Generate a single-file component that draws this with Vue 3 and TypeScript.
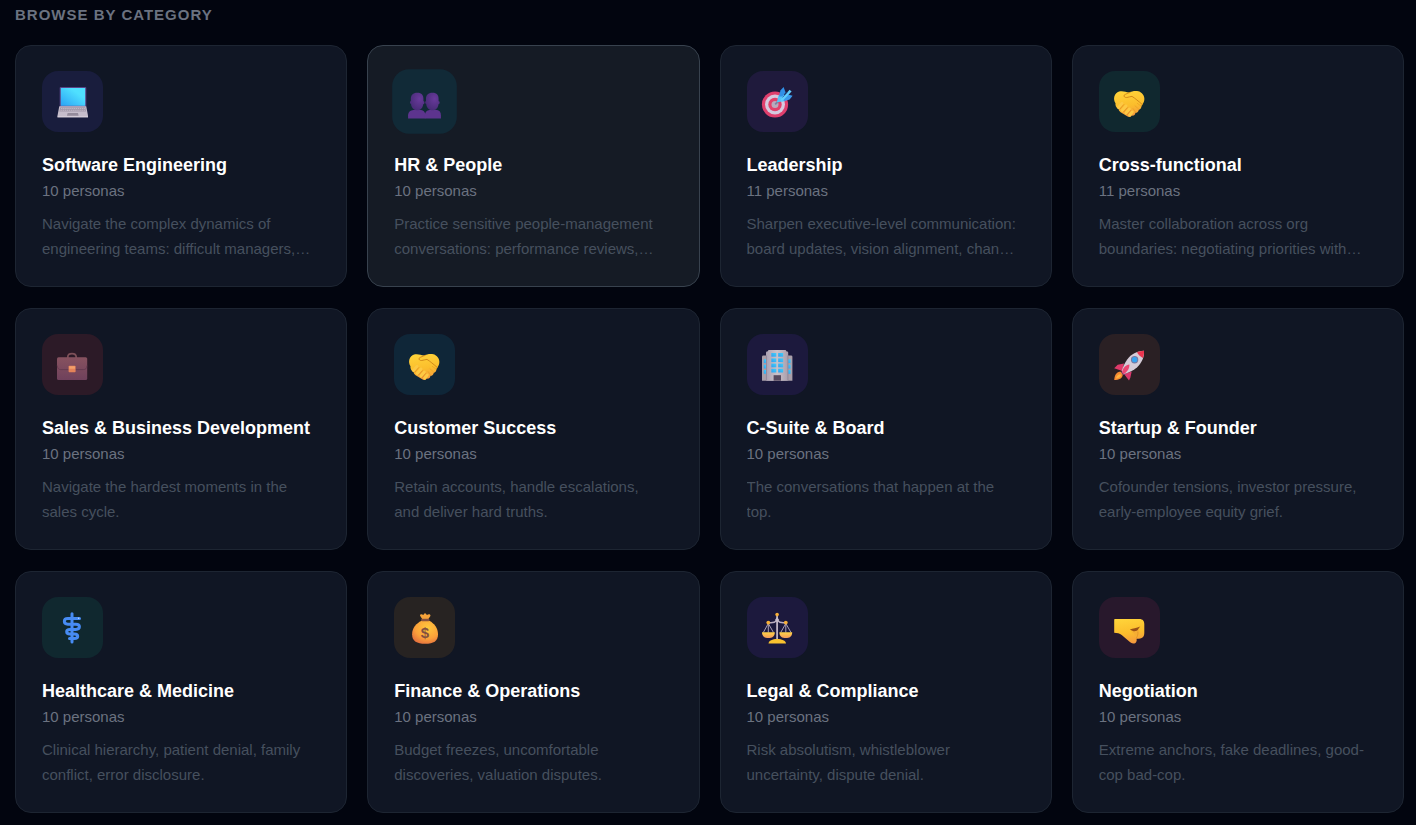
<script setup lang="ts">
interface Category {
  icon: string
  tone: string
  title: string
  count: number
  text: string
  active?: boolean
}

const categories: Category[] = [
  { icon: 'laptop', tone: 'indigo', title: 'Software Engineering', count: 10, text: 'Navigate the complex dynamics of engineering teams: difficult managers,…' },
  { icon: 'people', tone: 'teal', title: 'HR & People', count: 10, text: 'Practice sensitive people-management conversations: performance reviews,…', active: true },
  { icon: 'target', tone: 'purple', title: 'Leadership', count: 11, text: 'Sharpen executive-level communication: board updates, vision alignment, chan…' },
  { icon: 'handshake', tone: 'green', title: 'Cross-functional', count: 11, text: 'Master collaboration across org boundaries: negotiating priorities with…' },
  { icon: 'briefcase', tone: 'red', title: 'Sales & Business Development', count: 10, text: 'Navigate the hardest moments in the sales cycle.' },
  { icon: 'handshake', tone: 'sky', title: 'Customer Success', count: 10, text: 'Retain accounts, handle escalations, and deliver hard truths.' },
  { icon: 'building', tone: 'violet', title: 'C-Suite & Board', count: 10, text: 'The conversations that happen at the top.' },
  { icon: 'rocket', tone: 'orange', title: 'Startup & Founder', count: 10, text: 'Cofounder tensions, investor pressure, early-employee equity grief.' },
  { icon: 'medical', tone: 'green', title: 'Healthcare & Medicine', count: 10, text: 'Clinical hierarchy, patient denial, family conflict, error disclosure.' },
  { icon: 'money', tone: 'amber', title: 'Finance & Operations', count: 10, text: 'Budget freezes, uncomfortable discoveries, valuation disputes.' },
  { icon: 'scales', tone: 'violet', title: 'Legal & Compliance', count: 10, text: 'Risk absolutism, whistleblower uncertainty, dispute denial.' },
  { icon: 'fist', tone: 'pink', title: 'Negotiation', count: 10, text: 'Extreme anchors, fake deadlines, good-cop bad-cop.' },
]
</script>

<template>
  <section class="browse" aria-labelledby="browse-title">
    <svg class="defs" aria-hidden="true">
      <defs>
        <linearGradient id="g-screen" x1="1" y1="0" x2="0" y2="1">
          <stop offset="0.3" stop-color="#4fe0ff" /><stop offset="1" stop-color="#2aa2f5" />
        </linearGradient>
        <linearGradient id="g-hand" x1="0.2" y1="0" x2="0.4" y2="1">
          <stop offset="0" stop-color="#ffd43a" /><stop offset="0.6" stop-color="#fbbd2c" /><stop offset="1" stop-color="#f59a3e" />
        </linearGradient>
        <radialGradient id="g-head" cx="0.65" cy="0.35" r="0.75">
          <stop offset="0" stop-color="#693a9b" /><stop offset="1" stop-color="#452a74" />
        </radialGradient>
        <linearGradient id="g-case" x1="0" y1="0" x2="0" y2="1">
          <stop offset="0" stop-color="#87525f" /><stop offset="1" stop-color="#6f415c" />
        </linearGradient>
        <linearGradient id="g-wall" x1="0" y1="0" x2="1" y2="0">
          <stop offset="0" stop-color="#aaa0b2" /><stop offset="0.5" stop-color="#cbc3cb" /><stop offset="1" stop-color="#a89eac" />
        </linearGradient>
        <linearGradient id="g-window" x1="0" y1="1" x2="1" y2="0">
          <stop offset="0" stop-color="#2f9ff0" /><stop offset="1" stop-color="#42d0fb" />
        </linearGradient>
        <linearGradient id="g-pan" x1="0" y1="0" x2="0" y2="1">
          <stop offset="0" stop-color="#ffd447" /><stop offset="1" stop-color="#f59a5b" />
        </linearGradient>
        <radialGradient id="g-bag" cx="0.6" cy="0.3" r="0.8">
          <stop offset="0" stop-color="#ffc83c" /><stop offset="0.6" stop-color="#fba03a" /><stop offset="1" stop-color="#e0693f" />
        </radialGradient>
      </defs>
    </svg>

    <h2 id="browse-title" class="heading">BROWSE BY CATEGORY</h2>

    <div class="grid">
      <a v-for="c in categories" :key="c.title" href="#" class="card" :class="{ active: c.active }">
        <span class="tile" :class="c.tone">
          <svg class="icon" viewBox="0 -1 31 31" aria-hidden="true">
            <g v-if="c.icon === 'laptop'">
              <rect x="2.7" y="0" width="26.6" height="20" rx="1" fill="#5b4487" />
              <rect x="3.8" y="1" width="24.4" height="17.8" fill="url(#g-screen)" />
              <path d="M2.3 19.2H29.2L31 28.6V30.3H.5V28.6Z" fill="#c6bdcb" />
              <path d="M3.2 20.3H28.3L29.1 24.6H2.4Z" fill="#a298a9" />
              <path d="M4 21.5H28M3.5 23.3H28.5" stroke="#d5cdd7" stroke-width=".6" stroke-dasharray="1.4 .7" />
              <path d="M10.6 26H21L21.6 28.7H10Z" fill="#948b9b" />
              <path d="M.5 29.4H31V30.3H.5Z" fill="#ded7df" />
            </g>
            <g v-else-if="c.icon === 'people'">
              <path d="M0 30.5V27.5C0 23.7 3.5 22.5 6 22.3H11C14.4 22.5 16.3 24.4 16.3 27.5V30.5Z" fill="#5d348e" />
              <path d="M15.8 30.5V27.5C16 23.7 19 22.5 21 22.3H26C29.4 22.5 31 24.4 31 27.5V30.5Z" fill="#5d348e" />
              <path d="M8.7 6.2C13 6.2 14.6 8.7 14.5 12.3V14.2C15.7 13.9 16 16.8 14.3 17C14 20.2 12 22.7 8.7 22.7S3 20.2 2.8 16.8C1.5 16.6 1.4 14.2 2.6 14V12C2.6 8.6 4.5 6.2 8.7 6.2Z" fill="url(#g-head)" />
              <path d="M23 6.2C27.3 6.2 28.9 8.7 28.8 12.3V14.2C30.1 13.9 30.3 16.8 28.7 17C28.4 20.2 26.4 22.7 23 22.7S17.4 20.2 17.1 16.8C15.8 16.6 15.8 14.2 16.9 14V12C16.9 8.6 18.8 6.2 23 6.2Z" fill="url(#g-head)" />
            </g>
            <g v-else-if="c.icon === 'target'">
              <circle cx="13" cy="17.5" r="13.1" fill="#df3f6d" />
              <circle cx="13" cy="17.5" r="10" fill="#d5c9de" />
              <circle cx="13" cy="17.5" r="6.7" fill="#e2416a" />
              <circle cx="13" cy="17.5" r="3.5" fill="#baa9bc" />
              <path d="M13.2 17.4L18 12.5" stroke="#7685a4" stroke-width="1.8" />
              <path d="M14.8 15.2L16.4 8.8L20 6L25.4 10.3L22.4 14.2Z" fill="#55c3f7" />
              <path d="M17 9.4L18.4 3.4L21.6 0L23.6 5.4L20.4 9.6Z" fill="#3190e6" />
              <path d="M21.6 11.4L25.2 7.2L30.6 8.8L27.6 12.4L22 14.2Z" fill="#3b9bec" />
              <path d="M18.2 13.2L27.6 2.8L29.6 4.6L20.2 14.2Z" fill="#62cffc" />
              <path d="M20.6 10.4L25.4 5.2" stroke="#2765ad" stroke-width=".9" />
            </g>
            <g v-else-if="c.icon === 'handshake'">
              <path d="M6 4.3C9.3 3.7 12.2 5 14.8 5.6C18.3 4 23.4 3.3 26.5 5.2C30.5 7.6 31.4 12.6 29.3 16C28.5 17.5 27.8 18.4 27.3 19.5C27.5 21.5 26 22.5 24.8 22.7C24.5 24.7 23.3 25.8 21.5 25.8C21.2 28 19.5 29 17.8 28.6C16.3 30.5 14.3 30.4 13.2 29.3L6.6 25.2C5 23.9 4.7 22.9 4.4 21.7C1.8 20.4 1.2 18.3 1.5 16.2C-1.1 12.6-.4 5.8 6 4.3Z" fill="url(#g-hand)" />
              <path d="M16.2 5.4C13.8 6.1 11.8 7 10.2 8.1C9.5 9.7 11.2 10.8 12.8 10.5C14.5 10.3 16 9.5 18 9.4C21 11.2 24.5 14.3 28.3 17.5" fill="none" stroke="#d38a19" stroke-width="1" stroke-linecap="round" />
              <path d="M4.5 20.5L8 16.4M8.3 23.4L12 19M12 26L15.3 22M15.6 28.2L18.2 25" stroke="#fdc944" stroke-width="3" stroke-linecap="round" />
              <path d="M5.8 22.1L9.7 17.7M9.7 24.9L13.4 20.8M13.3 27.5L16.6 23.6" stroke="#dd8425" stroke-width=".7" stroke-linecap="round" />
              <path d="M19 21.5L21.5 24.9M21 18.8L24.6 22M23.3 16.3L27.2 19.2" stroke="#e8a124" stroke-width=".7" stroke-linecap="round" />
            </g>
            <g v-else-if="c.icon === 'briefcase'">
              <path d="M10.8 8.2V7C10.8 2.4 19.2 2.4 19.2 7V8.2" fill="none" stroke="#7d5058" stroke-width="1.7" />
              <rect x="0" y="7.2" width="30.2" height="22.9" rx="1.6" fill="url(#g-case)" />
              <path d="M.2 15.5C.8 19.3 2.2 19.6 4 19.6H26.2C28.5 19.6 29.7 18.8 30 15.5" fill="none" stroke="#5d354a" stroke-width=".7" />
              <rect x="11.6" y="15.8" width="7" height="6.5" rx=".8" fill="#e48359" />
              <rect x="12.2" y="16.3" width="5.8" height="2.5" rx=".5" fill="#f3a06b" />
            </g>
            <g v-else-if="c.icon === 'building'">
              <path d="M0 6.8Q0 5.4 1.4 5.4H29Q30.4 5.4 30.4 6.8V30.7H0Z" fill="#a99faa" />
              <path d="M4 2.4Q4.2 1.2 6 1.2V.8Q6 0 7 0H23.2Q24.2 0 24.2.8V1.2Q26 1.2 26.2 2.4V30.7H4Z" fill="url(#g-wall)" />
              <path d="M4.4 5.4V30.7M25.9 5.4V30.7" stroke="#887d91" stroke-width=".7" />
              <g fill="url(#g-window)">
                <rect x="9.3" y="3" width="5" height="3.7" /><rect x="16.2" y="3" width="5" height="3.7" />
                <rect x="9.3" y="8.4" width="5" height="3.7" /><rect x="16.2" y="8.4" width="5" height="3.7" />
                <rect x="9.3" y="13.6" width="5" height="3.7" /><rect x="16.2" y="13.6" width="5" height="3.7" />
                <rect x="9.3" y="18.8" width="5" height="3.7" /><rect x="16.2" y="18.8" width="5" height="3.7" />
                <rect x="1.8" y="9.3" width="2.2" height="3.8" /><rect x="26.4" y="9.3" width="2.2" height="3.8" />
                <rect x="1.8" y="14.7" width="2.2" height="3.8" /><rect x="26.4" y="14.7" width="2.2" height="3.8" />
                <rect x="1.8" y="20" width="2.2" height="3.8" /><rect x="26.4" y="20" width="2.2" height="3.8" />
              </g>
              <rect x="11.6" y="25.2" width="7.4" height="5.5" fill="#57495e" />
            </g>
            <g v-else-if="c.icon === 'rocket'">
              <path d="M7.2 21.8C4 21.2.6 23.5.2 30C5 29.9 8.6 28.4 8.8 24.5Z" fill="#f58a32" />
              <path d="M6.3 24.3C4.2 24.4 2.3 26 2 28.4C4.5 28.3 6.4 27 7.2 25.2Z" fill="#ffb43f" />
              <path d="M10 13.4L3.7 14.8L.2 18.3L8.3 21Z" fill="#df3a6a" />
              <path d="M17.7 21.6L16.4 27.5L15 30.4L10 24Z" fill="#d9376d" />
              <path d="M8.2 20.5L11.4 25.1L9.2 25L7.2 22.5Z" fill="#714178" />
              <path d="M30 .8C22.8 1 17 4.4 13.4 9.2C10.8 12.8 8.8 16.8 7.7 21L10.3 24C15 22.5 19.6 20.6 23.2 17.2C27.6 13 30.5 7.3 30 .8Z" fill="#d5ccd8" />
              <path d="M30 .8C27.5.9 25.2 1.3 23 2.1C24.2 4.8 26.2 6.8 28.9 7.9C29.8 5.7 30.1 3.2 30 .8Z" fill="#ec354f" />
              <path d="M8 22.2C9.2 17.6 11.6 15.2 15.4 14.6C15.6 18.4 13.4 22 9.6 24.2Z" fill="#ec4672" />
              <circle cx="20.6" cy="9.7" r="3.7" fill="#7779a4" />
              <circle cx="20.6" cy="9.7" r="2.6" fill="#36a3ef" />
            </g>
            <g v-else-if="c.icon === 'medical'" fill="none" stroke="#478bf3" stroke-linecap="round">
              <path d="M15 .8V29" stroke-width="3" />
              <path d="M22.5 5.5H10.8C6.2 5.5 6.2 11.2 10.8 11.2H18.8C23.6 11.2 23.6 16.4 18.8 16.4H13C8.6 16.4 8.6 20.9 13 20.9H17.4C21.8 20.9 21.8 25.5 17.4 25.5H12.5" stroke-width="3" />
              <circle cx="21.7" cy="5.2" r=".7" fill="#c9e3ff" stroke="none" />
            </g>
            <g v-else-if="c.icon === 'money'">
              <path d="M13.3 6.3L11.1 2.8C10.6 1.2 13 .8 14.2 2.1L16 0L18 2.1C19.5.7 21.9 1.3 21.4 2.9L19.2 6.3Z" fill="#f6a33a" />
              <path d="M12.6 7.8C7 10.4 3.1 15.4 3.1 21.2C3.1 28.2 7.8 30.7 16.2 30.7S29 28.2 29 21.2C29 15.4 25.4 10.4 20.3 7.8Z" fill="url(#g-bag)" />
              <rect x="12.2" y="5.7" width="8.2" height="2.5" rx="1" fill="#86503e" />
              <text x="16" y="25" class="dollar">$</text>
            </g>
            <g v-else-if="c.icon === 'scales'">
              <path d="M15.1 3V26" stroke="#bfb3c3" stroke-width="1.8" />
              <path d="M6.3 9.5C10 10.2 12.8 9.7 15.1 7.2C17.4 9.7 20 10.2 23.8 9.5" fill="none" stroke="#b9adc0" stroke-width="1.6" />
              <path d="M15.1 4L17.2 7L15.1 9.5L13 7Z" fill="#c8bdcb" />
              <path d="M6.3 10.5L1.3 19.5M6.3 10.5V19.5M6.3 10.5L11.5 19.5M23.8 10.5L18.7 19.5M23.8 10.5V19.5M23.8 10.5L29 19.5" stroke="#aa9fb5" stroke-width="1" />
              <circle cx="15.1" cy="1.6" r="1.8" fill="#f8b038" />
              <circle cx="6.3" cy="9.6" r="1.9" fill="#f8b038" /><circle cx="23.8" cy="9.6" r="1.9" fill="#f8b038" />
              <path d="M0 19.2H12.8C12.8 23.5 10 25.1 6.4 25.1S0 23.5 0 19.2Z" fill="url(#g-pan)" />
              <path d="M17.4 19.2H30.2C30.2 23.5 27.5 25.1 23.8 25.1S17.4 23.5 17.4 19.2Z" fill="url(#g-pan)" />
              <path d="M6.5 30.6C6.7 27.4 10.5 25.9 15.2 25.9S23.7 27.4 24 30.6Z" fill="#f9c22f" />
            </g>
            <g v-else>
              <path d="M.9 6H25.2C29 6 30.3 8.2 30.3 11.2V20.1C30.3 23.8 28.2 25.7 25 25.7H22.5C23.3 28.1 22 30.5 19.4 30.6C17.6 30.6 16.4 29.3 14.7 28L7.7 22C5.8 20.3 3 20 .2 19.8V6.8Q.2 6 .9 6Z" fill="url(#g-hand)" />
              <path d="M17.3 18.7C20.2 20.2 21.5 22.3 22.3 25.3C25.4 24 26.4 19.3 24.5 16.6" fill="#f5ae33" />
              <path d="M15.9 16.4C19 14.9 22.3 15.3 26.3 13.4C24 15.6 24.2 17.4 21.9 18.1C19.5 18.6 18 17.4 15.9 16.4Z" fill="#985017" />
              <path d="M23.8 18.6C24.2 21.2 23.4 23.6 22.2 25.2" fill="none" stroke="#dd8f28" stroke-width=".7" />
            </g>
          </svg>
        </span>
        <h3 class="title">{{ c.title }}</h3>
        <p class="count">{{ c.count }} personas</p>
        <p class="text">{{ c.text }}</p>
      </a>
    </div>
  </section>
</template>

<style>
body {
  background: #02050f;
}
</style>

<style scoped>
.browse {
  padding: 4px 12px 12px 15px;
  font-family: "Liberation Sans", Arial, sans-serif;
}
.defs {
  position: absolute;
  width: 0;
  height: 0;
}
.heading {
  margin: 0 0 20px;
  font-size: 15px;
  line-height: 21px;
  font-weight: 700;
  letter-spacing: 1px;
  color: #6b7280;
}
.grid {
  display: grid;
  grid-template-columns: repeat(4, minmax(0, 1fr));
  gap: 21px 20px;
}
.card {
  display: flex;
  flex-direction: column;
  align-items: flex-start;
  padding: 25px 26px;
  border: 1px solid #1d2532;
  border-radius: 16px;
  background: #101624;
  text-decoration: none;
}
.card.active {
  background: #151b25;
  border-color: #38424e;
}
.tile {
  display: flex;
  align-items: center;
  justify-content: center;
  width: 61px;
  height: 61px;
  margin-bottom: 20px;
  border-radius: 16px;
}
.card.active .tile {
  transform: scale(1.06);
}
.icon {
  width: 31px;
  height: 31px;
  overflow: visible;
}
.dollar {
  font: 700 15px "Liberation Sans", Arial, sans-serif;
  text-anchor: middle;
  fill: #83503f;
}
.indigo { background: #191d3d; }
.teal { background: #112a37; }
.purple { background: #1f1a3c; }
.green { background: #10282f; }
.red { background: #2c1a27; }
.sky { background: #0f2638; }
.violet { background: #1c193d; }
.orange { background: #2a2024; }
.amber { background: #272322; }
.pink { background: #28182c; }
.title {
  margin: 0 0 2px;
  font-size: 18px;
  line-height: 26px;
  font-weight: 700;
  color: #ffffff;
}
.count {
  margin: 0 0 10px;
  font-size: 15px;
  line-height: 21px;
  color: #6b7280;
}
.text {
  display: -webkit-box;
  -webkit-box-orient: vertical;
  -webkit-line-clamp: 2;
  overflow: hidden;
  margin: 0 7px 0 0;
  min-height: 50px;
  font-size: 15px;
  line-height: 25px;
  color: #46505e;
}
</style>
